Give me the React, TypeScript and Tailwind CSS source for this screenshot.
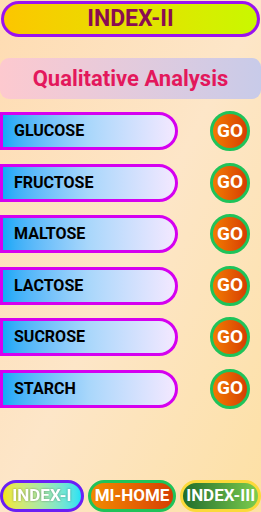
const items = ["GLUCOSE", "FRUCTOSE", "MALTOSE", "LACTOSE", "SUCROSE", "STARCH"];

function Row({ label }: { label: string }) {
  return (
    <div className="flex h-[40px] items-center justify-between pr-[11px]">
      <div className="flex h-[38px] w-[178px] items-center rounded-r-[19px] border-[3px] border-[#d500f0] bg-gradient-to-r from-[#0fa8f7] via-[#a9d7fb] to-[#f3e8ff] pl-[11px]">
        <span className="text-[16px] font-bold text-black">{label}</span>
      </div>
      <button className="flex h-[40px] w-[40px] items-center justify-center rounded-full border-[3px] border-[#1fc35a] bg-gradient-to-r from-[#f27a00] to-[#d63c04]">
        <span className="text-[19px] font-bold text-white">GO</span>
      </button>
    </div>
  );
}

export default function App() {
  return (
    <div
      className="flex h-[512px] w-[261px] flex-col overflow-hidden bg-gradient-to-br from-[#fedcb2] via-[#fde6c8] to-[#fde0a4]"
      style={{ fontFamily: "Roboto, 'Liberation Sans', sans-serif" }}
    >
      <div className="mx-[1px] mt-[1px] flex h-[36px] items-center justify-center rounded-[18px] border-[3px] border-[#9a12f0] bg-gradient-to-r from-[#fcc600] to-[#c9f800]">
        <span className="text-[23px] font-bold text-[#8a0c52]">INDEX-II</span>
      </div>

      <div className="mt-[21px] flex h-[41px] items-center justify-center rounded-[9px] bg-gradient-to-r from-[#fdc9cf] to-[#c8cbe9]">
        <span className="text-[22px] font-bold text-[#e3185c]">Qualitative Analysis</span>
      </div>

      <div className="mt-[12px] flex flex-col gap-[11.5px]">
        {items.map((it) => (
          <Row key={it} label={it} />
        ))}
      </div>

      <div className="mt-auto flex gap-[4px]">
        <button className="flex h-[32px] w-[84px] items-center justify-center rounded-[16px] border-[3px] border-[#6a1ff5] bg-gradient-to-r from-[#f3e800] to-[#1de2f4]">
          <span className="text-[17px] font-bold text-white drop-shadow-[0_0_1px_rgba(0,0,0,0.35)]">INDEX-I</span>
        </button>
        <button className="flex h-[32px] w-[89px] items-center justify-center rounded-[16px] border-[3px] border-[#1fc35a] bg-gradient-to-r from-[#f28a00] to-[#d63c04]">
          <span className="text-[17px] font-bold text-white">MI-HOME</span>
        </button>
        <button className="flex h-[32px] w-[81px] items-center justify-center rounded-[16px] border-[3px] border-[#fbd93a] bg-gradient-to-r from-[#1f6e2c] to-[#7ccd4e]">
          <span className="text-[17px] font-bold text-white">INDEX-III</span>
        </button>
      </div>
    </div>
  );
}
